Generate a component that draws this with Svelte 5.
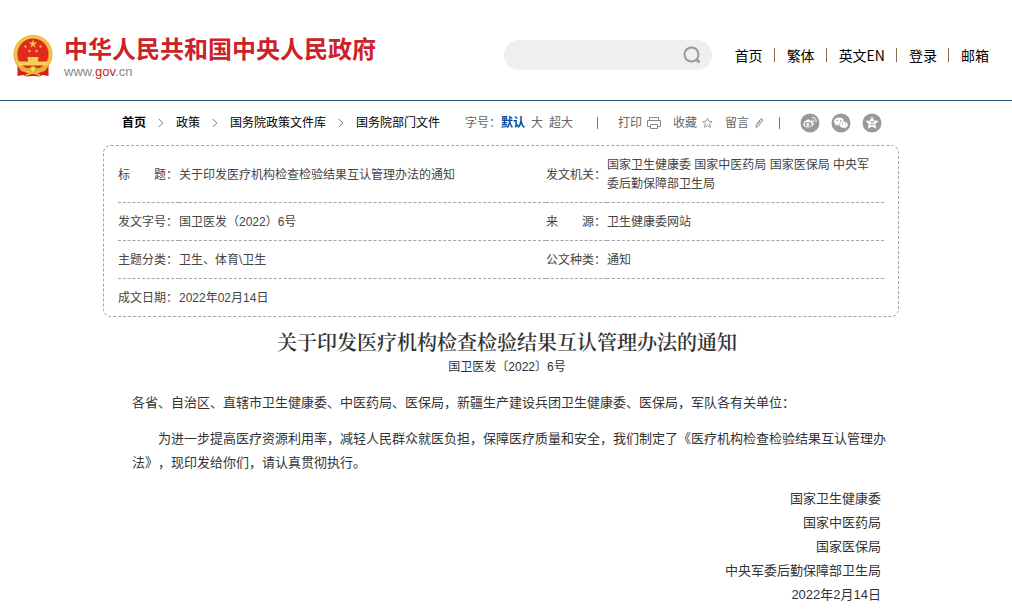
<script>
  const nav = ['首页', '繁体', '英文EN', '登录', '邮箱'];
  const crumbs = ['首页', '政策', '国务院政策文件库', '国务院部门文件'];
  const signatures = ['国家卫生健康委', '国家中医药局', '国家医保局', '中央军委后勤保障部卫生局', '2022年2月14日'];
</script>

{#snippet label(a, b)}
  <span class="label"><span>{a}</span><span>{b}</span></span>
{/snippet}

<header>
  <a class="logo" href="#home">
    <svg width="40" height="44" viewBox="0 0 40 44" aria-hidden="true">
      <path d="M4.500 30v12l6-1 3 1.500 6.500-.5 6.500.5 3-1.500 6 1V30z" fill="#d3201f" />
      <circle cx="20" cy="20.500" r="19.500" fill="#e9b036" />
      <circle cx="20" cy="20.500" r="17.500" fill="none" stroke="#f2c64c" stroke-width="2" />
      <circle cx="20" cy="20" r="15.500" fill="#e02a20" />
      <path d="M20 5.500l1 3h3.200l-2.600 2 1 3.200-2.600-2-2.600 2 1-3.200-2.600-2H19z" fill="#f8c83a" />
      <g fill="#f3b63a">
        <circle cx="12.500" cy="12.500" r="1.200" /><circle cx="27.500" cy="12.500" r="1.200" />
        <circle cx="16.500" cy="17" r="1.200" /><circle cx="23.500" cy="17" r="1.200" />
      </g>
      <path d="M15 23h10l1 2h-1v2.500h9v4H6v-4h9V25h-1z" fill="#f6cf58" />
      <path d="M5 31q9 6 15 1q6 5 15-1l-3 6q-5 2-8-1l-4 2-4-2q-3 3-8 1z" fill="#e6ae38" />
      <circle cx="20" cy="35.500" r="3" fill="#f7d65a" stroke="#d8962a" />
      <path d="M13 41.500q7-5 14 0" fill="none" stroke="#efb93d" stroke-width="2" />
    </svg>
    <span class="brand">
      <strong>中华人民共和国中央人民政府</strong>
      <span class="domain">www.<b>gov</b>.cn</span>
    </span>
  </a>
  <form class="search" role="search">
    <input type="search" aria-label="搜索" />
    <button type="button" aria-label="搜索">
      <svg width="18" height="18" viewBox="0 0 18 18" fill="none" stroke="#999" stroke-width="2">
        <circle cx="8.500" cy="8.500" r="7" /><path d="M13 13l3.500 3.500" stroke-width="2.500" />
      </svg>
    </button>
  </form>
  <nav class="top">
    {#each nav as item}<a href="#nav">{item}</a>{/each}
  </nav>
</header>

<main>
  <div class="bar">
    <nav class="crumbs">
      {#each crumbs as item, i}
        {#if i}
          <svg width="6" height="10" viewBox="0 0 6 10" fill="none" stroke="#777"><path d="M.8 1l4 4-4 4" /></svg>
        {/if}
        <a href="#crumb" class:first={i === 0}>{item}</a>
      {/each}
    </nav>
    <div class="size">
      <span>字号：</span><button class="on">默认</button><button>大</button><button>超大</button>
    </div>
    <i class="sep"></i>
    <div class="tools">
      <button>打印
        <svg width="14" height="14" viewBox="0 0 14 14" fill="none" stroke="#888">
          <path d="M2.500 4.500v-3h9v3M3 10.500H.5v-6h13v6H11M3.500 8.500h7v4h-7z" />
        </svg>
      </button>
      <button>收藏
        <svg width="11" height="12" viewBox="0 0 11 12" fill="none" stroke="#999">
          <path d="M5.500 1.200l1.400 3 3.300.4-2.500 2.200.7 3.500-2.900-1.700-2.900 1.700.7-3.500L.8 4.600l3.300-.4z" />
        </svg>
      </button>
      <button>留言
        <svg width="11" height="12" viewBox="0 0 11 12" fill="none" stroke="#888">
          <path d="M2 10.500l.5-3L7 1.500l2 1.500-4.500 6zM3.500 7.500l3-4" />
        </svg>
      </button>
    </div>
    <i class="sep near"></i>
    <div class="share">
      <button aria-label="微博">
        <svg width="20" height="20" viewBox="0 0 20 20">
          <circle cx="10" cy="10" r="9.500" fill="#999" />
          <path d="M8 6.500c1.200-.4 1.800.2 1.500 1.300 1.500-.6 3-.3 2.700 1.200 1.500.4 1.900 1.400 1.300 2.600-1 2-3.600 3-6.300 2.800-2.600-.2-4.200-1.500-3.900-3.300C3.600 9.300 6 7.100 8 6.500z" fill="#fff" />
          <ellipse cx="8.200" cy="11.300" rx="3.500" ry="2.300" fill="#999" />
          <circle cx="7.800" cy="11.500" r="1.500" fill="#fff" />
          <path d="M12 6.800q2-.2 1.900 2M12 4.500q4.500-.3 4 4.500" fill="none" stroke="#fff" />
        </svg>
      </button>
      <button aria-label="微信">
        <svg width="20" height="20" viewBox="0 0 20 20">
          <circle cx="10" cy="10" r="9.500" fill="#999" />
          <path d="M8 4.500c-3 0-5 1.800-5 4 0 1.300.7 2.400 1.800 3.100L4.300 13l1.900-.9c.6.200 1.200.3 1.800.3 3 0 5-1.800 5-4s-2-3.900-5-3.900z" fill="#fff" />
          <path d="M12.700 8.300c-2.500 0-4.300 1.500-4.300 3.400s1.800 3.400 4.300 3.400l1.500-.2 1.600.8-.4-1.300c1-.6 1.700-1.600 1.700-2.700 0-1.900-2-3.400-4.400-3.400z" fill="#fff" stroke="#999" stroke-width=".6" />
          <g fill="#999"><circle cx="6.300" cy="7.500" r=".7" /><circle cx="9.700" cy="7.500" r=".7" /><circle cx="11.400" cy="10.800" r=".6" /><circle cx="14.200" cy="10.800" r=".6" /></g>
        </svg>
      </button>
      <button aria-label="QQ空间">
        <svg width="20" height="20" viewBox="0 0 20 20">
          <circle cx="10" cy="10" r="9.500" fill="#999" />
          <path d="M10 3.200l2 4.200 4.700.5-3.400 3.200.9 4.700-4.200-2.300-4.200 2.300.9-4.700-3.400-3.200 4.700-.5z" fill="#fff" />
          <path d="M7.500 8.700h4.500L8.500 11.700h4.200" fill="none" stroke="#999" stroke-width=".8" />
        </svg>
      </button>
    </div>
  </div>

  <div class="meta">
    <table>
      <colgroup><col class="k" /><col /><col class="k" /><col class="v" /></colgroup>
      <tbody>
        <tr>
          <th>{@render label('标', '题：')}</th><td>关于印发医疗机构检查检验结果互认管理办法的通知</td>
          <th>发文机关：</th><td>国家卫生健康委 国家中医药局 国家医保局 中央军委后勤保障部卫生局</td>
        </tr>
        <tr>
          <th>发文字号：</th><td>国卫医发（2022）6号</td>
          <th>{@render label('来', '源：')}</th><td>卫生健康委网站</td>
        </tr>
        <tr>
          <th>主题分类：</th><td>卫生、体育\卫生</td>
          <th>公文种类：</th><td>通知</td>
        </tr>
        <tr>
          <th>成文日期：</th><td colspan="3">2022年02月14日</td>
        </tr>
      </tbody>
    </table>
  </div>

  <article>
    <h1>关于印发医疗机构检查检验结果互认管理办法的通知</h1>
    <p class="number">国卫医发〔2022〕6号</p>
    <p>各省、自治区、直辖市卫生健康委、中医药局、医保局，新疆生产建设兵团卫生健康委、医保局，军队各有关单位：</p>
    <p class="indent">为进一步提高医疗资源利用率，减轻人民群众就医负担，保障医疗质量和安全，我们制定了《医疗机构检查检验结果互认管理办法》，现印发给你们，请认真贯彻执行。</p>
    <div class="sign">
      {#each signatures as s}<div>{s}</div>{/each}
    </div>
  </article>
</main>

<style>
  :global(body) {
    margin: 0;
    background: #fff;
    color: #333;
    font: 12px/20px "Liberation Sans", "Noto Sans CJK SC", sans-serif;
    text-spacing-trim: space-all;
  }
  a { color: inherit; text-decoration: none; }
  svg { display: block; flex: none; }
  button {
    display: flex;
    align-items: center;
    padding: 0;
    border: 0;
    background: none;
    color: inherit;
    font: inherit;
    cursor: pointer;
  }
  header {
    display: flex;
    align-items: center;
    padding: 30px 23px 20px 13px;
    min-height: 50px;
    border-bottom: 1px solid #2b4f81;
  }
  .logo { display: flex; align-items: center; gap: 11px; margin-right: auto; }
  .logo svg { margin-top: 2px; }
  .brand { display: flex; flex-direction: column; padding-top: 4px; white-space: nowrap; }
  .brand strong { color: #cc2229; font-size: 24px; line-height: 30px; font-weight: 700; }
  .domain { color: #888; font-size: 13px; line-height: 14px; }
  .domain b { color: #cc2229; font-weight: 400; }
  .search {
    display: flex;
    align-items: center;
    box-sizing: border-box;
    width: 208px;
    height: 30px;
    padding: 0 11px 0 14px;
    margin-right: 23px;
    border-radius: 15px;
    background: #efefef;
  }
  .search input { flex: 1; min-width: 0; border: 0; outline: 0; background: none; font: inherit; }
  .top { display: flex; align-items: center; color: #000; font-family: "Noto Sans CJK SC", sans-serif; font-size: 14px; white-space: nowrap; }
  .top a + a { display: flex; align-items: center; }
  .top a + a::before { content: ""; width: 1px; height: 14px; margin: 0 12px 0 11px; background: #8a6d4a; }

  main { padding: 0 113px 0 103px; }
  .bar {
    display: flex;
    align-items: center;
    height: 44px;
    padding: 0 17px 0 19px;
    color: #666;
    white-space: nowrap;
  }
  .crumbs { display: flex; align-items: center; gap: 12px; margin-right: auto; color: #000; }
  .crumbs .first { font-weight: 700; }
  .size { display: flex; align-items: center; }
  .size button + button { margin-left: 6px; }
  .size .on { color: #004a98; font-weight: 700; }
  .sep { width: 1px; height: 12px; margin: 0 20px 0 24px; background: #777; }
  .sep.near { margin-left: 14px; }
  .tools { display: flex; gap: 12px; }
  .tools button { gap: 5px; }
  .share { display: flex; gap: 11px; }

  .meta { border: 1px dashed #a5a5a5; border-radius: 8px; padding: 0 14px; color: #444; }
  table { width: 100%; table-layout: fixed; border-collapse: separate; border-spacing: 0; }
  .k { width: 61px; }
  .v { width: 277px; }
  th, td { padding: 10px 0 8px; border-bottom: 1px dashed #a5a5a5; font-weight: 400; line-height: 19px; text-align: left; vertical-align: middle; }
  td { padding-right: 6px; }
  th { white-space: nowrap; }
  tr:last-child > * { border-bottom: 0; }
  .label { display: flex; justify-content: space-between; width: 60px; }

  article { padding: 12px 13px 0 29px; font-size: 13px; line-height: 24px; }
  h1 { margin: 0; padding-right: 4px; font-family: "Noto Serif CJK SC", "Noto Sans CJK SC", serif; font-size: 20px; line-height: 26px; font-weight: 600; text-align: center; }
  p { margin: 12px 0; }
  .number { margin: 0; padding-right: 4px; font-size: 12px; text-align: center; }
  .indent { text-indent: 2em; }
  .sign { padding-right: 5px; text-align: right; }
</style>
